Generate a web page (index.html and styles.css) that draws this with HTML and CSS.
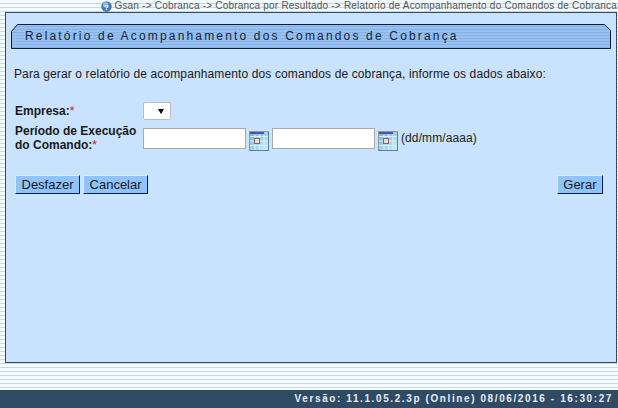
FILE: index.html
```html
<!DOCTYPE html>
<html lang="pt">
<head>
<meta charset="utf-8">
<title>Relatório de Acompanhamento dos Comandos de Cobrança</title>
<link rel="stylesheet" href="styles.css">
</head>
<body>
<svg class="defs" width="0" height="0" aria-hidden="true">
  <defs>
    <linearGradient id="calgrad" x1="0" y1="0" x2="1" y2="1">
      <stop offset="0" stop-color="#7fb0cf"/>
      <stop offset="1" stop-color="#c4f0fb"/>
    </linearGradient>
    <symbol id="cal" viewBox="0 0 20 20">
      <rect width="20" height="20" fill="#8d9aa3"/>
      <rect x="1" y="1" width="18" height="18" fill="url(#calgrad)"/>
      <rect x="1" y="1" width="14" height="2" fill="#4a55a8"/>
      <path d="M1 5.500H19M1 10H19M1 14.500H19M6 4V19M10.500 4V19M15 4V19" stroke="#d8f2fa" stroke-width="1" fill="none"/>
      <rect x="5.500" y="7.500" width="5" height="5" fill="#e6dfe0" stroke="#8a5f72"/>
      <rect x="19" y="1" width="1" height="19" fill="#5b7f94"/>
      <rect y="19" width="20" height="1" fill="#5b7f94"/>
    </symbol>
  </defs>
</svg>
<div class="page">
  <div class="crumbs">
    <svg class="help" width="11" height="11" viewBox="0 0 11 11" aria-hidden="true">
      <circle cx="5.500" cy="5.500" r="5.200" fill="#3a78b8"/>
      <circle cx="4.500" cy="3.800" r="2.800" fill="#8dbbe6"/>
      <text x="5.500" y="8.600" class="help-q">?</text>
    </svg>
    <span>Gsan -&gt; Cobranca -&gt; Cobranca por Resultado -&gt; Relatorio de Acompanhamento do Comandos de Cobranca</span>
  </div>
  <main class="panel">
    <div class="title">
      <svg class="title-frame" width="600" height="25" viewBox="0 0 600 25" aria-hidden="true">
        <path d="M0 0H6L0 7ZM594 0H600V6Z" fill="#c9e2fd"/>
        <path d="M.5 24.500V7.500L6.500 .5H593.500L599.500 6.500V24.500Z" fill="none" stroke="#0e1d33"/>
      </svg>
      <h1>Relatório de Acompanhamento dos Comandos de Cobrança</h1>
    </div>
    <p class="intro">Para gerar o relatório de acompanhamento dos comandos de cobrança, informe os dados abaixo:</p>
    <div class="form">
      <div class="label">Empresa:<span class="req">*</span></div>
      <div class="field"><div class="select"><span class="arrow"></span></div></div>
      <div class="label">Período de Execução<br>do Comando:<span class="req">*</span></div>
      <div class="field dates">
        <div class="input"></div>
        <svg class="cal" width="20" height="20" aria-hidden="true"><use href="#cal"/></svg>
        <div class="input"></div>
        <svg class="cal" width="20" height="20" aria-hidden="true"><use href="#cal"/></svg>
        <span class="hint">(dd/mm/aaaa)</span>
      </div>
    </div>
    <div class="actions">
      <div class="group">
        <button class="btn" type="button">Desfazer</button>
        <button class="btn" type="button">Cancelar</button>
      </div>
      <button class="btn" type="button">Gerar</button>
    </div>
  </main>
  <footer class="footer">Versão: 11.1.05.2.3p (Online) 08/06/2016 - 16:30:27</footer>
</div>
</body>
</html>
```
FILE: styles.css
```css
* { box-sizing: border-box; }
html, body { margin: 0; padding: 0; }
body {
  width: 618px;
  height: 408px;
  overflow: hidden;
  font-family: "Liberation Sans", Arial, sans-serif;
  font-size: 12px;
  color: #1a1a1a;
  background: repeating-linear-gradient(to bottom, #f4fbff 0, #f4fbff 3px, #c8d9e2 3px, #c8d9e2 4px);
}
.defs { position: absolute; }
.page {
  display: flex;
  flex-direction: column;
  height: 408px;
}
.crumbs {
  height: 12px;
  display: flex;
  justify-content: flex-end;
  align-items: center;
  gap: 2px;
  padding-right: 1px;
  font-size: 10px;
  line-height: 12px;
  letter-spacing: .21px;
  color: #555;
  white-space: nowrap;
}
.help { flex: none; }
.help-q {
  font-family: "Liberation Sans", Arial, sans-serif;
  font-size: 8px;
  font-weight: bold;
  fill: #fff;
  text-anchor: middle;
}
.panel {
  height: 351px;
  margin: 0 1px 0 5px;
  padding: 11px 5px 0;
  background: #c9e2fd;
  border: 1px solid #2f4a63;
}
.title {
  position: relative;
  height: 25px;
  background: repeating-linear-gradient(to bottom, #97c1f0 0, #97c1f0 2px, #86b2e6 2px, #86b2e6 3px);
}
.title-frame {
  position: absolute;
  left: 0;
  top: 0;
}
.title h1 {
  position: relative;
  margin: 0;
  padding-left: 14px;
  font-size: 12px;
  font-weight: normal;
  line-height: 24px;
  letter-spacing: 2.17px;
  color: #16243a;
  white-space: nowrap;
}
.intro {
  margin: 18px 0 0 3px;
  font-size: 12px;
  line-height: 14px;
  letter-spacing: .12px;
}
.form {
  display: grid;
  grid-template-columns: 128px 1fr;
  row-gap: 1px;
  margin: 20px 0 0 4px;
}
.label {
  font-weight: bold;
  line-height: 14px;
  padding-top: 3px;
  color: #1a1a1a;
}
.req { color: #d6102c; font-weight: normal; }
.field { display: flex; align-items: flex-start; }
.select {
  width: 28px;
  height: 18px;
  margin-top: 1px;
  background: #fff;
  border: 1px solid #b9bec4;
  border-radius: 2px;
  display: flex;
  align-items: center;
  justify-content: flex-end;
  padding-right: 6px;
}
.arrow {
  width: 0;
  height: 0;
  border-left: 3px solid transparent;
  border-right: 3px solid transparent;
  border-top: 5px solid #000;
}
.dates { margin-top: 7px; }
.input {
  width: 103px;
  height: 21px;
  background: #fff;
  border: 1px solid #a9a9a9;
}
.cal { margin: 3px 3px 0; flex: none; }
.hint { margin-top: 3px; font-size: 12px; letter-spacing: .1px; color: #222; }
.actions {
  display: flex;
  justify-content: space-between;
  margin: 23px 8px 0 4px;
}
.group { display: flex; gap: 3px; }
.btn {
  height: 19px;
  padding: 0 5.500px;
  font-family: "Liberation Sans", Arial, sans-serif;
  font-size: 13px;
  line-height: 16px;
  color: #1a1a1a;
  background: #8fc4fb;
  border: 1px solid;
  border-color: #dcecfb #0c1c5c #0c1c5c #dcecfb;
  border-radius: 0;
}
.footer {
  margin-top: auto;
  height: 18px;
  background: #2f4a63;
  color: #e8eef4;
  font-size: 10px;
  font-weight: bold;
  line-height: 18px;
  letter-spacing: 1.6px;
  text-align: right;
  padding-right: 5px;
  white-space: nowrap;
}
```
